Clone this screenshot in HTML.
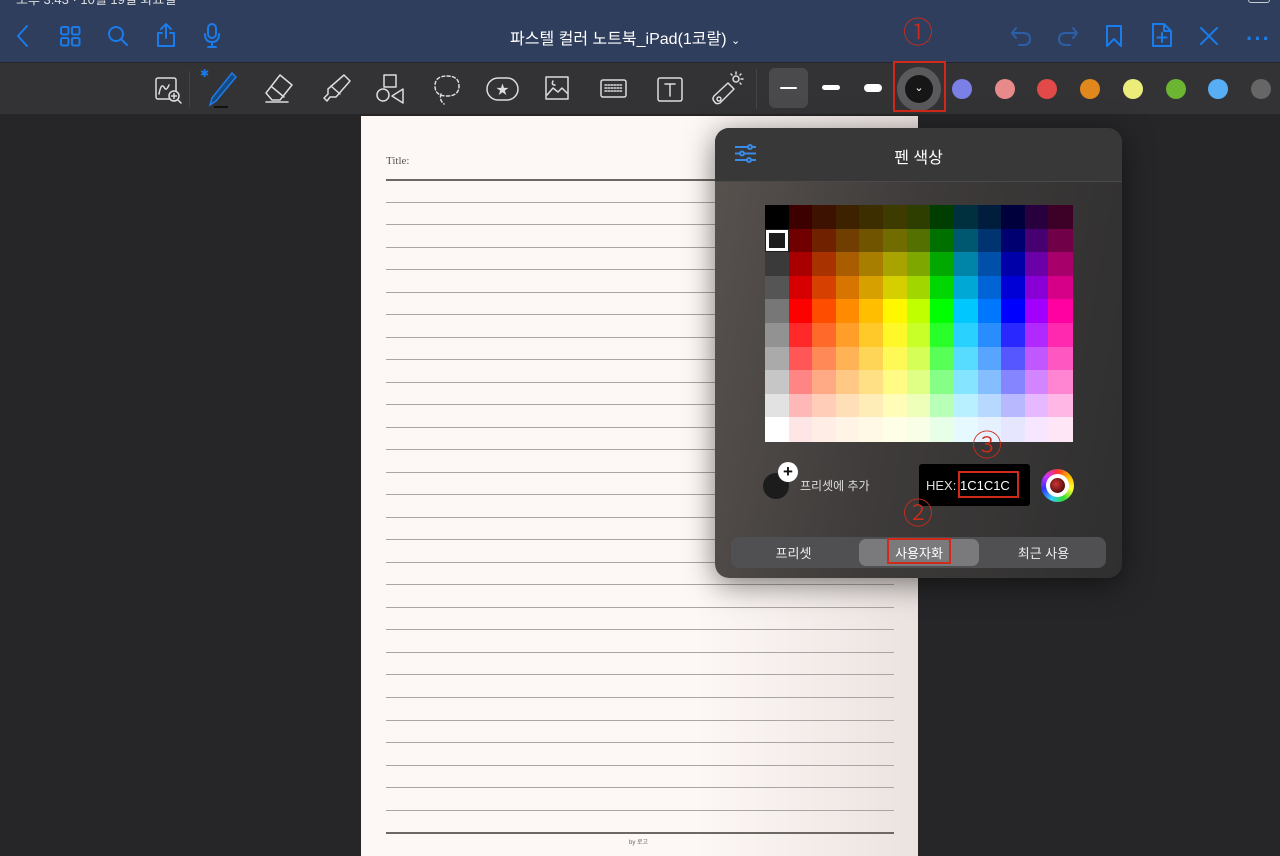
<!DOCTYPE html>
<html><head><meta charset="utf-8">
<style>
*{margin:0;padding:0;box-sizing:border-box}
body{width:1280px;height:856px;overflow:hidden;background:#262628;font-family:"Liberation Sans","Noto Sans CJK KR",sans-serif;position:relative}
.abs{position:absolute}
#top{left:0;top:0;width:1280px;height:62px;background:#2f3e5c;overflow:hidden}
#tb{left:0;top:62px;width:1280px;height:52px;background:#333335;border-top:1px solid #24242a}
svg{position:absolute;overflow:visible}
.b{stroke:#1a7bea;fill:none;stroke-width:2;stroke-linecap:round;stroke-linejoin:round}
.w{stroke:#ddd;fill:none;stroke-width:1.5;stroke-linecap:round;stroke-linejoin:round}
#paper{left:361px;top:116px;width:557px;height:740px;background:linear-gradient(90deg,#fdf7f5 60%,#ebe3e0 100%)}
.ln{position:absolute;left:25px;width:508px;height:1px;background:#aaa5a2}
#pop{left:715px;top:128px;width:407px;height:450px;border-radius:14px;background:linear-gradient(100deg,#58524f 0%,#3e3b3a 45%,#2f2f2f 100%);box-shadow:0 6px 30px rgba(0,0,0,.5);overflow:hidden}
#ph{left:0;top:0;width:407px;height:54px;background:#383838;border-bottom:1px solid #4a4a4a}
.red{position:absolute;border:2px solid #d22a1a}
.circ{position:absolute;color:#d22a1a;font-size:30px;line-height:30px;font-weight:300}
</style></head><body>
<div id="top" class="abs">
  <div class="abs" style="left:16px;top:-11px;color:#ddd;font-size:13px">오후 3:43 · 10월 19일 화요일</div>
  <div class="abs" style="right:10px;top:-8px;width:22px;height:11px;border:1px solid #ccc;border-radius:3px"></div>
  <svg style="left:14px;top:24px" width="20" height="24"><path class="b" d="M13 2 L4 12 L13 22"/></svg>
  <svg style="left:60px;top:26px" width="22" height="22"><g class="b"><rect x="1" y="1" width="7.5" height="7.5" rx="1.5"/><rect x="12" y="1" width="7.5" height="7.5" rx="1.5"/><rect x="1" y="12" width="7.5" height="7.5" rx="1.5"/><rect x="12" y="12" width="7.5" height="7.5" rx="1.5"/></g></svg>
  <svg style="left:107px;top:25px" width="22" height="22"><g class="b"><circle cx="9" cy="9" r="7"/><path d="M14 14 L20 20"/></g></svg>
  <svg style="left:155px;top:22px" width="22" height="26"><g class="b"><path d="M11 2 V16 M6 7 L11 2 L16 7 M7 11 H3 V24 H19 V11 H15"/></g></svg>
  <svg style="left:203px;top:23px" width="18" height="26"><g class="b"><rect x="5" y="1" width="8" height="14" rx="4"/><path d="M2 11 Q2 19 9 19 Q16 19 16 11 M9 19 V24 M5 24 H13"/></g></svg>
  <div class="abs" style="left:510px;top:25px;color:#fff;font-size:16px">파스텔 컬러 노트북_iPad(1코랄) <span style="font-size:11px">⌄</span></div>
  <svg style="left:1010px;top:26px" width="22" height="20"><path class="b" style="stroke:#2c5fa8" d="M6 2 L2 7 L6 12 M2 7 H13 Q20 7 20 13 Q20 19 13 19 H9"/></svg>
  <svg style="left:1057px;top:26px" width="22" height="20"><path class="b" style="stroke:#2c5fa8" d="M16 2 L20 7 L16 12 M20 7 H9 Q2 7 2 13 Q2 19 9 19 H13"/></svg>
  <svg style="left:1105px;top:24px" width="20" height="24"><path class="b" d="M2 2 H16 V22 L9 15 L2 22 Z"/></svg>
  <svg style="left:1151px;top:22px" width="22" height="26"><g class="b"><path d="M2 2 H13 L20 9 V24 H2 Z M13 2 V9 H20 M11 11 V20 M6.5 15.5 H15.5"/></g></svg>
  <svg style="left:1199px;top:26px" width="20" height="20"><path class="b" d="M2 2 L18 18 M18 2 L2 18"/></svg>
  <div class="abs" style="left:1246px;top:26px;color:#1a7bea;font-size:22px;letter-spacing:1px;font-weight:bold">···</div>
</div>
<div id="tb" class="abs">
  <svg style="left:155px;top:14px" width="28" height="28"><g class="w"><rect x="1" y="1" width="20" height="21" rx="2"/><path d="M4 17 Q6 6 9 10 Q11 15 14 8"/><circle cx="19" cy="19" r="5" fill="#333"/><path d="M19 16.5 V21.5 M16.5 19 H21.5 M23 23 L26 26"/></g></svg>
  <div class="abs" style="left:189px;top:8px;width:1px;height:36px;background:#444"></div>
  <div class="abs" style="left:200px;top:4px;color:#1a7bea;font-size:11px">✱</div>
  <svg style="left:206px;top:8px" width="36" height="36"><path d="M26 2 L30 6 L10 30 L4 34 L6 27 Z" fill="#164a80" stroke="#1a7bea" stroke-width="1.5"/><path d="M8 36 H22" stroke="#111" stroke-width="2"/></svg>
  <svg style="left:262px;top:10px" width="34" height="32"><g class="w"><path d="M18 2 L30 12 L18 27 L10 27 L4 20 Z M10 14 L22 24 M4 29 H26"/></g></svg>
  <svg style="left:322px;top:10px" width="30" height="32"><g class="w"><path d="M22 2 L28 8 L14 24 L8 24 L5 28 L2 25 L6 21 L6 16 Z M9 13 L18 21"/></g></svg>
  <svg style="left:375px;top:10px" width="32" height="32"><g class="w"><rect x="9" y="2" width="12" height="12"/><circle cx="8" cy="22" r="6"/><path d="M28 16 V30 L17 23 Z"/></g></svg>
  <svg style="left:433px;top:11px" width="28" height="32"><path class="w" stroke-dasharray="3 2.5" d="M14 2 Q26 2 26 12 Q26 22 14 22 Q2 22 2 12 Q2 2 14 2 M8 20 Q6 26 11 30"/></svg>
  <svg style="left:486px;top:13px" width="34" height="28"><g class="w"><rect x="1" y="2" width="31" height="22" rx="11"/></g><text x="16.5" y="18" fill="#ddd" font-size="13" text-anchor="middle">★</text></svg>
  <svg style="left:545px;top:13px" width="26" height="26"><g class="w"><rect x="1" y="1" width="22" height="22"/><path d="M2 19 L8 12 L13 16 L17 12 L22 17"/><path d="M8 5 Q6 9 10 9"/></g></svg>
  <svg style="left:600px;top:16px" width="28" height="20"><g class="w"><rect x="1" y="1" width="25" height="17" rx="2"/><path d="M5 6 H22 M5 9 H22 M5 12 H22" stroke-dasharray="1.5 1.5"/></g></svg>
  <svg style="left:655px;top:14px" width="30" height="26"><g class="w"><rect x="3" y="1" width="24" height="23" rx="2"/><path d="M10 7 H20 M15 7 V19"/></g></svg>
  <svg style="left:710px;top:8px" width="34" height="36"><g class="w"><path d="M18 12 L24 18 L10 32 Q6 34 4 30 Q2 28 4 25 Z"/><circle cx="9" cy="28" r="2"/><circle cx="26" cy="8" r="3"/><path d="M26 1 V3 M33 8 H31 M31 3 L30 4 M21 3 L22 4 M31 13 L30 12"/></g></svg>
  <div class="abs" style="left:756px;top:6px;width:1px;height:40px;background:#444"></div>
  <div class="abs" style="left:769px;top:5px;width:39px;height:40px;background:#4a4a4c;border-radius:6px"></div>
  <div class="abs" style="left:780px;top:24px;width:17px;height:2px;background:#fff;border-radius:1px"></div>
  <div class="abs" style="left:822px;top:22px;width:18px;height:5px;background:#fff;border-radius:3px"></div>
  <div class="abs" style="left:864px;top:21px;width:18px;height:8px;background:#fff;border-radius:4px"></div>
  <div class="abs" style="left:897px;top:4px;width:44px;height:44px;border-radius:50%;background:#5a5a5c"></div>
  <div class="abs" style="left:905px;top:12px;width:28px;height:28px;border-radius:50%;background:#161616;color:#fff;font-size:11px;text-align:center;line-height:26px">⌄</div>
  <div class="abs" style="left:952px;top:16px;width:20px;height:20px;border-radius:50%;background:#7b80e6"></div>
  <div class="abs" style="left:995px;top:16px;width:20px;height:20px;border-radius:50%;background:#e98a8a"></div>
  <div class="abs" style="left:1037px;top:16px;width:20px;height:20px;border-radius:50%;background:#e24a4a"></div>
  <div class="abs" style="left:1080px;top:16px;width:20px;height:20px;border-radius:50%;background:#e0881e"></div>
  <div class="abs" style="left:1123px;top:16px;width:20px;height:20px;border-radius:50%;background:#ecec7a"></div>
  <div class="abs" style="left:1166px;top:16px;width:20px;height:20px;border-radius:50%;background:#6bb532"></div>
  <div class="abs" style="left:1208px;top:16px;width:20px;height:20px;border-radius:50%;background:#58aef5"></div>
  <div class="abs" style="left:1251px;top:16px;width:20px;height:20px;border-radius:50%;background:#666"></div>
</div>
<div class="red" style="left:893px;top:61px;width:53px;height:51px"></div>
<div class="circ" style="left:903px;top:19px">①</div>

<div id="paper" class="abs">
  <div class="abs" style="left:25px;top:39px;font-family:'Liberation Serif',serif;font-size:11px;color:#555">Title:</div>
  <div id="lines"></div>
  <div class="abs" style="left:268px;top:721px;font-size:6px;color:#666">by 로고</div>
</div>

<div id="pop" class="abs">
  <div id="ph" class="abs"></div>
  <svg style="left:20px;top:16px" width="22" height="20"><g stroke="#3a8ae8" stroke-width="2" fill="none"><path d="M0 3 H21 M0 9.5 H21 M0 16 H21"/><circle cx="15" cy="3" r="2" fill="#383838"/><circle cx="7" cy="9.5" r="2" fill="#383838"/><circle cx="14" cy="16" r="2" fill="#383838"/></g></svg>
  <div class="abs" style="left:0;width:407px;top:16px;text-align:center;color:#fff;font-size:16px">펜 색상</div>
  <div id="grid" class="abs" style="left:50px;top:77px;width:307px;height:236px"></div>
  <div class="abs" style="left:48px;top:345px;width:26px;height:26px;border-radius:50%;background:#1c1c1c"></div>
  <div class="abs" style="left:63px;top:334px;width:20px;height:20px;border-radius:50%;background:#fff;color:#111;font-size:17px;font-weight:bold;text-align:center;line-height:19px">+</div>
  <div class="abs" style="left:85px;top:349px;color:#ddd;font-size:12px">프리셋에 추가</div>
  <div class="abs" style="left:204px;top:336px;width:111px;height:42px;background:#000;border-radius:3px"></div>
  <div class="abs" style="left:211px;top:350px;color:#ddd;font-size:13px">HEX: <span style="color:#fff">1C1C1C</span></div>
  <div class="abs" style="left:326px;top:341px;width:33px;height:33px;border-radius:50%;background:conic-gradient(#f33,#fb0,#ff3,#3d3,#3cf,#33f,#c3f,#f33)"></div>
  <div class="abs" style="left:331px;top:346px;width:23px;height:23px;border-radius:50%;background:#fff"></div>
  <div class="abs" style="left:335px;top:350px;width:15px;height:15px;border-radius:50%;background:radial-gradient(circle at 40% 40%,#c33,#200)"></div>
  <div class="abs" style="left:16px;top:409px;width:375px;height:31px;background:#505052;border-radius:8px"></div>
  <div class="abs" style="left:144px;top:411px;width:120px;height:27px;background:#7a7a7c;border-radius:7px"></div>
  <div class="abs" style="left:16px;top:415px;width:125px;text-align:center;color:#eee;font-size:13px">프리셋</div>
  <div class="abs" style="left:144px;top:415px;width:120px;text-align:center;color:#fff;font-size:13px">사용자화</div>
  <div class="abs" style="left:266px;top:415px;width:125px;text-align:center;color:#eee;font-size:13px">최근 사용</div>
</div>
<div class="red" style="left:958px;top:471px;width:61px;height:27px"></div>
<div class="circ" style="left:972px;top:432px">③</div>
<div class="red" style="left:887px;top:538px;width:64px;height:26px"></div>
<div class="circ" style="left:903px;top:500px">②</div>

<script>
var L=document.getElementById('lines'),h='';
for(var i=0;i<30;i++){var y=63+i*22.52;var d=(i==0||i==29);h+='<div class="ln" style="top:'+y.toFixed(1)+'px;'+(d?'background:#6e6864;height:1.5px':'')+'"></div>';}
L.innerHTML=h;
var G=document.getElementById('grid');
var grays=['#000','#1c1c1c','#3a3a3a','#555','#777','#929292','#aaa','#c6c6c6','#e2e2e2','#fff'];
var hues=[0,18,33,45,58,75,120,193,212,240,278,322];
var Ls=[12,22,33,42,50,58,67,76,86,95];
var cw=307/13,ch=236/10,s='';
for(var r=0;r<10;r++){for(var c=0;c<13;c++){var col=c==0?grays[r]:'hsl('+hues[c-1]+',100%,'+Ls[r]+'%)';
s+='<div style="position:absolute;left:'+(c*cw).toFixed(2)+'px;top:'+(r*ch).toFixed(2)+'px;width:'+(cw+0.6).toFixed(2)+'px;height:'+(ch+0.6).toFixed(2)+'px;background:'+col+'"></div>';}}
s+='<div style="position:absolute;left:1px;top:'+(ch+1)+'px;width:'+(cw-2)+'px;height:'+(ch-2)+'px;border:3px solid #fff"></div>';
G.innerHTML=s;
</script>
</body></html>
